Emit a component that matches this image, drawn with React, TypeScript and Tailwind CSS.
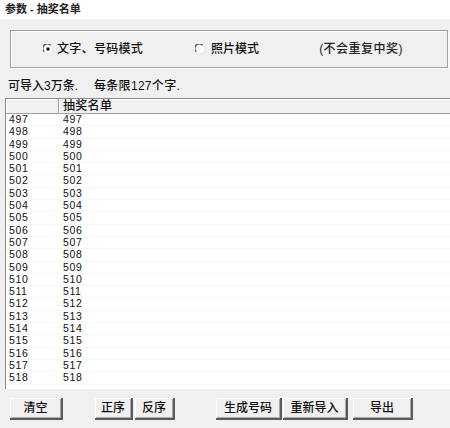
const rows = Array.from({ length: 22 }, (_, i) => String(497 + i));

function Radio({ checked }: { checked?: boolean }) {
  return (
    <svg width="10" height="10" viewBox="0 0 10 10" className="shrink-0">
      <circle cx="5" cy="5" r="4.5" fill="#fff" />
      <path d="M1.2 7.6 A4.2 4.2 0 0 1 7.6 1.2" fill="none" stroke="#555" strokeWidth="1.5" />
      <path d="M8.6 2.6 A4.2 4.2 0 0 1 2.6 8.6" fill="none" stroke="#e4e4e4" strokeWidth="1" />
      {checked && <circle cx="5" cy="5" r="1.7" fill="#111" />}
    </svg>
  );
}

function Btn({ label, className }: { label: string; className: string }) {
  return (
    <button
      className={`h-[22px] bg-[#f0f0f0] border-r-2 border-b-2 border-[#5a5a5a] shadow-[inset_1px_1px_0_#fff,inset_-1px_-1px_0_#a8a8a8] text-[12px] font-medium text-[#111] flex items-center justify-center ${className}`}
    >
      {label}
    </button>
  );
}

export default function App() {
  return (
    <div
      className="w-[450px] h-[428px] bg-white flex flex-col overflow-hidden text-[#111]"
      style={{ fontFamily: '"Liberation Sans", "Noto Sans CJK SC", sans-serif' }}
    >
      {/* Title */}
      <div className="h-[19px] shrink-0 pl-[5px] pt-[3px] text-[11px] leading-[12px] font-bold text-[#222]">
        参数 - 抽奖名单
      </div>

      {/* Panel */}
      <div className="flex-1 bg-[#f0f0f0] flex flex-col">
        {/* Group box */}
        <div className="mt-[11px] ml-[10px] mr-[2px] h-[38px] border border-[#a0a0a0] shadow-[inset_1px_1px_0_#fff,1px_1px_0_#fff] flex items-center text-[12px] font-medium">
          <div className="ml-[32px] flex items-center">
            <Radio checked />
            <span className="ml-[4px] tracking-[0.3px]">文字、号码模式</span>
          </div>
          <div className="ml-[52px] flex items-center">
            <Radio />
            <span className="ml-[6px]">照片模式</span>
          </div>
          <span className="ml-[60px] text-[#222] tracking-[0.5px]">(不会重复中奖)</span>
        </div>

        {/* Hint */}
        <div className="mt-[12px] ml-[8px] h-[12px] leading-[12px] text-[12px] font-medium flex">
          <span>可导入3万条.</span>
          <span className="ml-[16px] tracking-[0.3px]">每条限127个字.</span>
        </div>

        {/* Table */}
        <div className="mt-[6px] ml-[5px] w-[445px] h-[291px] bg-white border-t border-l border-[#8a8a8a] flex flex-col overflow-hidden">
          <div className="h-[15px] shrink-0 flex bg-[#f0f0f0] border-b border-[#a0a0a0] text-[12px] leading-[14px] font-medium">
            <div className="w-[53px] border-r border-[#a0a0a0] shadow-[inset_1px_1px_0_#fff]" />
            <div className="flex-1 pl-[4px] tracking-[0.3px] shadow-[inset_1px_1px_0_#fff]">抽奖名单</div>
          </div>
          <div className="flex flex-col text-[10.5px] tracking-[0.6px]">
            {rows.map((r) => (
              <div key={r} className="h-[12.3px] leading-[11.3px] flex border-b border-[#f6f6f6]">
                <div className="w-[54px] pl-[3px]">{r}</div>
                <div className="flex-1 pl-[3px]">{r}</div>
              </div>
            ))}
          </div>
        </div>

        {/* Buttons */}
        <div className="mt-[9px] flex pl-[10px]">
          <Btn label="清空" className="w-[53px]" />
          <Btn label="正序" className="ml-[32px] w-[38px]" />
          <Btn label="反序" className="ml-[2px] w-[40px]" />
          <Btn label="生成号码" className="ml-[41px] w-[66px]" />
          <Btn label="重新导入" className="ml-[1px] w-[65px]" />
          <Btn label="导出" className="ml-[5px] w-[60px]" />
        </div>
      </div>
    </div>
  );
}
